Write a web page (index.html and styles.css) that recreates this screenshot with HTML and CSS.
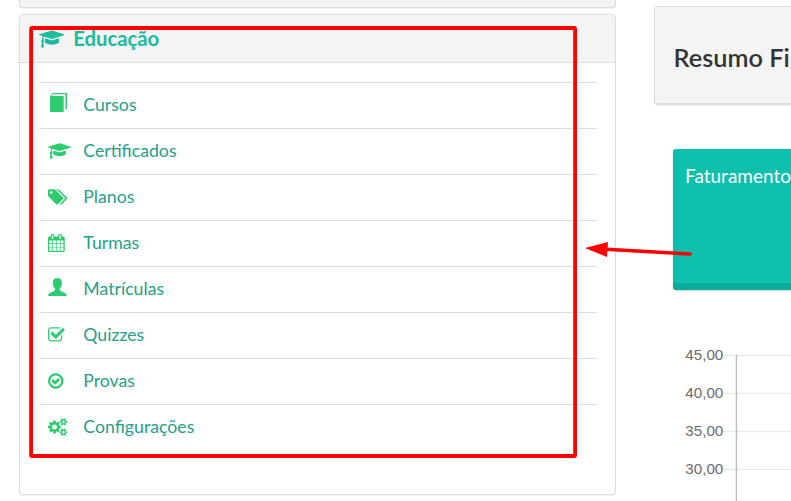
FILE: index.html
```html
<!DOCTYPE html>
<html lang="pt-BR">
<head>
<meta charset="utf-8">
<title>Educação</title>
<link rel="stylesheet" href="styles.css">
</head>
<body>
<div class="page">
  <div class="sidebar">
    <section class="card card-prev"></section>
    <section class="card card-main">
      <header class="card-header">
        <svg class="icon-head" viewBox="0 0 2304 1792"><path d="M1774 836l18 316q4 69-82 128t-235 93.5-323 34.5-323-34.5-235-93.5-82-128l18-316 574 181q22 7 48 7t48-7zm530-324q0 23-22 31l-1120 352q-4 1-10 1t-10-1l-652-206q-43 34-71 111.5t-34 178.5q63 36 63 109 0 69-58 107l58 433q2 14-8 25-9 11-24 11h-192q-15 0-24-11-10-11-8-25l58-433q-58-38-58-107 0-73 65-111 11-207 98-330l-333-104q-22-8-22-31t22-31l1120-352q4-1 10-1t10 1l1120 352q22 8 22 31z"/></svg>
        <h2>Educação</h2>
      </header>
      <ul class="menu">
        <li><span class="ico ico-book"><svg width="20" height="20" viewBox="0 0 20 20"><path d="M5 0H19V15.5L17.500 17V1.300H5.300L3.600 3H15.700V19H2V3.200Z"/></svg></span><a>Cursos</a></li>
        <li><span class="ico"><svg width="23.14" height="18" viewBox="0 0 2304 1792"><path d="M1774 836l18 316q4 69-82 128t-235 93.5-323 34.5-323-34.5-235-93.5-82-128l18-316 574 181q22 7 48 7t48-7zm530-324q0 23-22 31l-1120 352q-4 1-10 1t-10-1l-652-206q-43 34-71 111.5t-34 178.5q63 36 63 109 0 69-58 107l58 433q2 14-8 25-9 11-24 11h-192q-15 0-24-11-10-11-8-25l58-433q-58-38-58-107 0-73 65-111 11-207 98-330l-333-104q-22-8-22-31t22-31l1120-352q4-1 10-1t10 1l1120 352q22 8 22 31z"/></svg></span><a>Certificados</a></li>
        <li><span class="ico"><svg width="19.29" height="18" viewBox="0 0 1920 1792"><path d="M448 448q0-53-37.5-90.5t-90.5-37.500-90.5 37.5-37.5 90.5 37.5 90.5 90.5 37.5 90.5-37.500 37.5-90.500zm1067 576q0 53-37 90l-491 492q-39 37-91 37-53 0-90-37l-715-716q-38-37-64.5-101t-26.5-117v-416q0-52 38-90t90-38h416q53 0 117 26.5t102 64.5l715 714q37 39 37 91zm384 0q0 53-37 90l-491 492q-39 37-91 37-36 0-59-14t-53-45l470-470q37-37 37-90 0-52-37-91l-715-714q-38-38-102-64.500t-117-26.500h224q53 0 117 26.5t102 64.5l715 714q37 39 37 91z"/></svg></span><a>Planos</a></li>
        <li><span class="ico"><svg width="16.71" height="18" viewBox="64 0 1664 1792"><path d="M192 1664h288v-288h-288v288zm352 0h320v-288h-320v288zm-352-352h288v-320h-288v320zm352 0h320v-320h-320v320zm-352-384h288v-288h-288v288zm736 736h320v-288h-320v288zm-384-736h320v-288h-320v288zm768 736h288v-288h-288v288zm-384-352h320v-320h-320v320zm-352-864v-288q0-13-9.5-22.500t-22.5-9.500h-64q-13 0-22.5 9.5t-9.5 22.5v288q0 13 9.5 22.5t22.5 9.5h64q13 0 22.5-9.500t9.5-22.500zm736 864h288v-320h-288v320zm-384-384h320v-288h-320v288zm384 0h288v-288h-288v288zm32-480v-288q0-13-9.5-22.500t-22.5-9.500h-64q-13 0-22.5 9.5t-9.5 22.5v288q0 13 9.5 22.5t22.5 9.5h64q13 0 22.5-9.500t9.5-22.500zm384-64v1280q0 52-38 90t-90 38h-1408q-52 0-90-38t-38-90v-1280q0-52 38-90t90-38h128v-96q0-66 47-113t113-47h64q66 0 113 47t47 113v96h384v-96q0-66 47-113t113-47h64q66 0 113 47t47 113v96h128q52 0 90 38t38 90z"/></svg></span><a>Turmas</a></li>
        <li><span class="ico ico-user"><svg width="20" height="20" viewBox="0 0 20 20"><path d="M9.300 0C12.400 0 13.900 1.900 13.900 4.900C13.900 7.300 13 9.200 11.900 10.300V12.200C12.400 13.400 16.700 14.200 18 15.700Q18.700 16.500 18.700 18H0.200Q0.200 16.500 0.900 15.700C2.200 14.200 6.300 13.400 6.900 12.200V10.300C5.700 9.200 4.800 7.300 4.800 4.900C4.800 1.900 6.200 0 9.300 0Z"/></svg></span><a>Matrículas</a></li>
        <li><span class="ico"><svg width="16.71" height="18" viewBox="64 0 1664 1792"><path d="M1472 930v318q0 119-84.5 203.5t-203.5 84.5h-832q-119 0-203.5-84.500t-84.5-203.500v-832q0-119 84.5-203.500t203.5-84.500h832q63 0 117 25 15 7 18 23 3 17-9 29l-49 49q-10 10-23 10-3 0-9-2-23-6-45-6h-832q-66 0-113 47t-47 113v832q0 66 47 113t113 47h832q66 0 113-47t47-113v-254q0-13 9-22l64-64q10-10 23-10 6 0 12 3 20 8 20 29zm231-489l-814 814q-24 24-57 24t-57-24l-430-430q-24-24-24-57t24-57l110-110q24-24 57-24t57 24l263 263 647-647q24-24 57-24t57 24l110 110q24 24 24 57t-24 57z"/></svg></span><a>Quizzes</a></li>
        <li><span class="ico"><svg width="15.43" height="18" viewBox="128 0 1536 1792"><path d="M1299 813l-422 422q-19 19-45 19t-45-19l-294-294q-19-19-19-45t19-45l102-102q19-19 45-19t45 19l147 147 275-275q19-19 45-19t45 19l102 102q19 19 19 45t-19 45zm141 83q0-148-73-273t-198-198-273-73-273 73-198 198-73 273 73 273 198 198 273 73 273-73 198-198 73-273zm224 0q0 209-103 385.5t-279.5 279.5-385.5 103-385.5-103-279.5-279.500-103-385.500 103-385.500 279.5-279.500 385.5-103 385.5 103 279.5 279.5 103 385.500z"/></svg></span><a>Provas</a></li>
        <li><span class="ico"><svg width="19.29" height="18" viewBox="0 0 1920 1792"><path d="M896 896q0-106-75-181t-181-75-181 75-75 181 75 181 181 75 181-75 75-181zm768 512q0-52-38-90t-90-38-90 38-38 90q0 53 37.5 90.5t90.5 37.5 90.5-37.500 37.5-90.500zm0-1024q0-52-38-90t-90-38-90 38-38 90q0 53 37.5 90.5t90.5 37.5 90.5-37.500 37.5-90.500zm-384 421v185q0 10-7 19.5t-16 10.5l-155 24q-11 35-32 76 34 48 90 115 7 11 7 20 0 12-7 19-23 30-82.5 89.5t-78.5 59.5q-11 0-21-7l-115-90q-37 19-77 31-11 108-23 155-7 24-30 24h-186q-11 0-20-7.500t-10-17.500l-23-153q-34-10-75-31l-118 89q-7 7-20 7-11 0-21-8-144-133-144-160 0-9 7-19 10-14 41-53t47-61q-23-44-35-82l-152-24q-10-1-17-9.500t-7-19.500v-185q0-10 7-19.500t16-10.500l155-24q11-35 32-76-34-48-90-115-7-11-7-20 0-12 7-20 22-30 82-89t79-59q11 0 21 7l115 90q34-18 77-32 11-108 23-154 7-24 30-24h186q11 0 20 7.5t10 17.5l23 153q34 10 75 31l118-89q8-7 20-7 11 0 21 8 144 133 144 160 0 8-7 19-12 16-42 54t-45 60q23 48 34 82l152 23q10 2 17 10.5t7 19.500zm640 533v140q0 16-149 31-12 27-30 52 51 113 51 138 0 4-4 7-122 71-124 71-8 0-46-47t-52-68q-20 2-30 2t-30-2q-14 21-52 68t-46 47q-2 0-124-71-4-3-4-7 0-25 51-138-18-25-30-52-149-15-149-31v-140q0-16 149-31 13-29 30-52-51-113-51-138 0-4 4-7 4-2 35-20t59-34 30-16q8 0 46 46.5t52 67.5q20-2 30-2t30 2q51-71 92-112l6-2q4 0 124 70 4 3 4 7 0 25-51 138 17 23 30 52 149 15 149 31zm0-1024v140q0 16-149 31-12 27-30 52 51 113 51 138 0 4-4 7-122 71-124 71-8 0-46-47t-52-68q-20 2-30 2t-30-2q-14 21-52 68t-46 47q-2 0-124-71-4-3-4-7 0-25 51-138-18-25-30-52-149-15-149-31v-140q0-16 149-31 13-29 30-52-51-113-51-138 0-4 4-7 4-2 35-20t59-34 30-16q8 0 46 46.5t52 67.5q20-2 30-2t30 2q51-71 92-112l6-2q4 0 124 70 4 3 4 7 0 25-51 138 17 23 30 52 149 15 149 31z"/></svg></span><a>Configurações</a></li>
      </ul>
    </section>
  </div>
  <main class="content">
    <section class="summary"><h1>Resumo Fi</h1></section>
    <section class="tile">Faturamento</section>
    <svg class="chart" width="118" height="161" viewBox="0 0 118 161">
      <g stroke="#000" stroke-opacity=".1" stroke-width="1">
        <path d="M50 15.500H118M50 53.300H118M50 91.700H118M50 129.500H118"/>
      </g>
      <path d="M63.400 15V161" stroke="#000" stroke-opacity=".26" stroke-width="1.400"/>
      <g class="ticks">
        <text x="50.300" y="20">45,00</text>
        <text x="50.300" y="58">40,00</text>
        <text x="50.300" y="96">35,00</text>
        <text x="50.300" y="134">30,00</text>
        <text x="50.300" y="171">25,00</text>
      </g>
    </svg>
  </main>
</div>
<svg class="annotation" width="791" height="501" viewBox="0 0 791 501">
  <rect x="31.100" y="28" width="544" height="428" rx="1" fill="none" stroke="red" stroke-width="3.800"/>
  <path d="M606 249.300L690 254" stroke="red" stroke-width="3.600" stroke-linecap="round"/>
  <path d="M585 248L608 242L607 257Z" fill="red"/>
</svg>
</body>
</html>
```
FILE: styles.css
```css
* { box-sizing: border-box; }
body {
  margin: 0;
  height: 501px;
  overflow: hidden;
  background: #fff;
  font-family: Lato, "Liberation Sans", sans-serif;
}
.page {
  display: flex;
  height: 501px;
  overflow: hidden;
}
.sidebar {
  flex: none;
  width: 597px;
  margin-left: 19px;
}
.card {
  border: 1px solid #ddd;
  border-radius: 4px;
  background: #fff;
  box-shadow: 0 1px 1px rgba(0, 0, 0, .05);
}
.card-prev {
  height: 8px;
  margin-bottom: 6px;
  border-top: 0;
  border-radius: 0 0 4px 4px;
  background: #f4f4f4;
}
.card-main { height: 481px; }
.card-header {
  display: flex;
  height: 48px;
  padding: 14px 18.500px 0;
  border-bottom: 1px solid #ddd;
  border-radius: 3px 3px 0 0;
  background: #f4f4f4;
  color: #1abc9c;
}
.icon-head {
  width: 25.700px;
  height: 20px;
  fill: currentColor;
}
h1, h2 { margin: 0; }
h2 {
  margin: -1px 0 0 9px;
  font-size: 20.300px;
  line-height: 20px;
  font-weight: 700;
}
.menu {
  margin: 19px 18px 0 19px;
  padding: 0;
  list-style: none;
}
.menu li {
  display: flex;
  height: 46px;
  padding: 11px 0 0 9px;
  border-top: 1px solid #ddd;
}
.ico {
  flex: none;
  width: 35.300px;
}
.ico svg {
  display: block;
  margin: 2px 0 0 .4px;
  fill: #2ecc71;
}
.ico-book svg { margin: -1px 0 0; }
.ico-user svg { margin: 0; }
.menu a {
  color: #26a08a;
  font-size: 17.700px;
  line-height: 22px;
}
.content {
  flex: none;
  width: 240px;
  margin-left: 38px;
}
.summary {
  height: 99px;
  margin-top: 6px;
  padding: 35px 0 0 18.500px;
  border: 1px solid #ddd;
  border-bottom-width: 2px;
  border-radius: 4px;
  background: #f4f4f4;
  box-shadow: 0 1px 1px rgba(0, 0, 0, .05);
}
h1 {
  color: #333;
  font-size: 25.300px;
  line-height: 30px;
  font-weight: 600;
  white-space: nowrap;
}
.tile {
  height: 141px;
  margin: 44px 0 0 19px;
  padding: 15px 12px 0;
  border-bottom: 7px solid #0cac9a;
  border-radius: 3px;
  background: #0dbfac;
  box-shadow: 0 1px 2px rgba(0, 0, 0, .2);
  color: #fff;
  font-size: 19px;
  line-height: 24px;
}
.chart {
  display: block;
  margin: 50px 0 0 19px;
}
.ticks {
  fill: #6c6c6c;
  font: 15.200px "Liberation Sans", Arial, sans-serif;
  text-anchor: end;
}
.annotation {
  position: absolute;
  top: 0;
  left: 0;
  pointer-events: none;
}
```
